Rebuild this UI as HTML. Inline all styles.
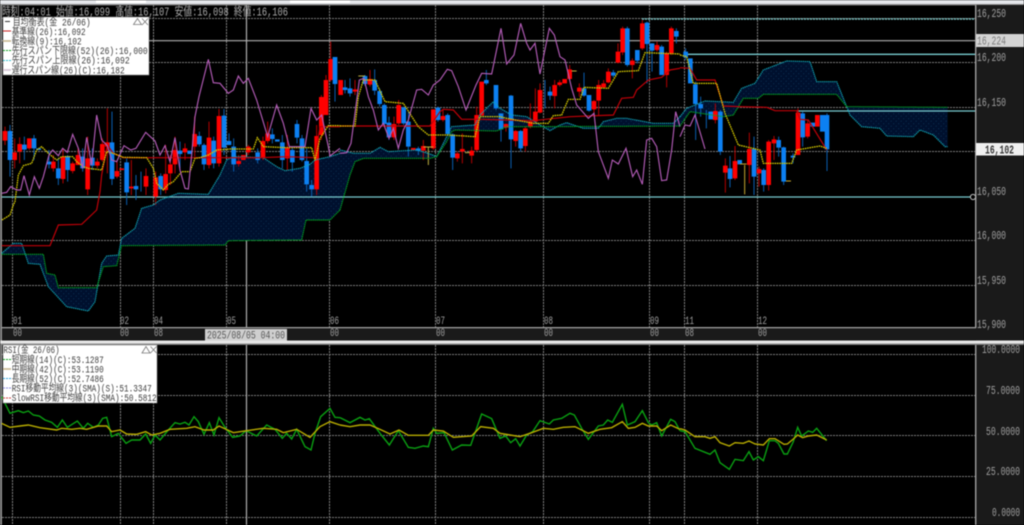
<!DOCTYPE html>
<html lang="ja"><head><meta charset="utf-8"><title>Chart</title>
<style>
html,body{margin:0;padding:0;background:#000;width:1024px;height:525px;overflow:hidden}
svg{display:block;filter:blur(.4px)}
text{font-family:"Liberation Mono","Noto Sans CJK JP",monospace}
.ax{font-size:12px;fill:#a0a0a0}
.t{font-size:11px;fill:#a0a0a0}
.lg{font-size:10px;fill:#404040}
.hl{stroke:#7c7c7c;stroke-width:1;stroke-dasharray:2 1;fill:none}
.vl{stroke:#888;stroke-width:1;stroke-dasharray:2 1;fill:none}
.rb{fill:#ff0000}.bb{fill:#0c80f2}
.rw{stroke:#c00000;stroke-width:2.8;fill:none}
.bw{stroke:#0a64bc;stroke-width:2.8;fill:none}
.p{stroke:#b45cb8;stroke-width:3.4;fill:none}
.y{stroke:#d4c800;stroke-width:3.8;fill:none;stroke-dasharray:5 2}
.k{stroke:#c00008;stroke-width:3.6;fill:none}
.a{stroke:#10a8b8;stroke-width:3.4;fill:none;stroke-dasharray:4 2}
.g{stroke:#00a824;stroke-width:3.4;fill:none;stroke-dasharray:4 2}
.c{fill:url(#d)}
.gr{stroke:#0aa012;stroke-width:4.2;fill:none}
.ol{stroke:#b8ac00;stroke-width:4.2;fill:none}
</style></head><body>
<svg width="1024" height="525" viewBox="0 0 1024 525" xmlns="http://www.w3.org/2000/svg">
<defs>
<pattern id="d" width="15" height="15" patternUnits="userSpaceOnUse">
<rect width="15" height="15" fill="#00102e"/>
<circle cx="3.5" cy="3.5" r="1" fill="#1a7aa0"/><circle cx="11" cy="11" r="1" fill="#1a7aa0"/>
</pattern>
</defs>
<rect width="1024" height="525" fill="#000"/>
<!-- top strip -->
<rect width="1024" height="4" fill="#e4e6ea"/>
<rect y="4" width="1024" height="1.4" fill="#8a8a8a"/>
<rect x="96" y="0" width="50" height="3" fill="#fff"/>
<rect x="290" y="0" width="60" height="3" fill="#fff"/>
<!-- frame -->
<rect x="0" y="5" width="2" height="520" fill="#8e8e8e"/>
<rect x="976" y="5" width="48" height="336" fill="#1a1a1a"/>
<rect x="976" y="345" width="48" height="180" fill="#1a1a1a"/>
<rect x="975" y="5" width="1.4" height="323" fill="#a0a0a0"/>
<rect x="975" y="345" width="1.4" height="180" fill="#a0a0a0"/>
<rect x="2" y="328.2" width="974" height="12" fill="#1a1a1a"/>
<rect x="2" y="327" width="974" height="1.3" fill="#a0a0a0"/>
<rect x="0" y="340.5" width="1024" height="3" fill="#e6e6e6"/>
<rect x="0" y="343.5" width="1024" height="1.4" fill="#8a8a8a"/>
<!-- main grid -->
<path class="hl" d="M2 18.5H975M2 62.5H975M2 107.5H975M2 151.5H975M2 240.5H975M2 285.5H975"/>
<path class="vl" d="M12.5 5V327M120.5 5V327M153.5 5V327M226.5 5V327M329.5 5V327M435.5 5V327M543.5 5V327M649.5 5V327M684.5 5V327M757.5 5V327"/>
<path stroke="#b0b0b0" stroke-width="1.2" fill="none" d="M246.5 5V327M2 40.7H975"/>
<!-- clouds -->
<g transform="translate(0,105) scale(.33333)">
<polygon class="c" points="5,445 40,415 65,415 85,475 120,478 145,545 200,605 265,618 285,590 305,475 320,453 355,450 365,400 405,370 425,310 460,300 480,285 535,265 625,268 660,210 680,165 700,155 790,158 830,185 855,197 900,190 930,178 945,165 990,155 1020,145 1020,315 990,345 918,345 905,405 685,407 675,420 365,422 350,482 310,485 290,548 175,548 165,510 140,505 130,448 5,448"/>
</g>
<g transform="translate(340,0) scale(.33333)">
<polygon class="c" points="0,450 40,460 90,460 120,442 145,455 230,450 270,462 290,470 310,430 335,380 405,375 420,345 460,305 480,325 515,345 560,350 600,375 630,392 660,375 680,368 730,385 775,385 790,365 830,355 860,355 940,370 1000,370 1020,350 1020,378 600,380 500,380 470,393 345,390 335,395 320,425 290,470 270,475 70,475 45,485 30,525 0,630"/>
</g>
<g transform="translate(680,0) scale(.33333)">
<polygon class="c" points="0,350 20,325 75,303 160,307 185,265 225,250 250,210 320,183 390,185 410,245 470,245 500,320 510,345 545,380 600,385 620,408 700,410 720,390 760,405 795,440 803,440 803,322 500,320 470,283 250,283 235,295 190,295 160,345 130,350 30,335 0,378"/>
</g>
<!-- teal price lines -->
<path stroke="#78c4c4" stroke-width="1.4" fill="none" d="M642 19H975" stroke-dasharray="2 1"/>
<path stroke="#78ccd0" stroke-width="1.3" fill="none" d="M686 54.3H975M797 111H975M2 197H970"/>
<circle cx="973" cy="197" r="2.6" fill="#000" stroke="#c0c0c0" stroke-width="1"/>
<!-- candles left -->
<g transform="translate(0,105) scale(.33333)">
<path class="rw" d="M15 65V120M44 100V190M59 97V175M88 100V135M160 150V200M189 130V235M218 170V205M234 130V180M263 95V270M292 160V190M307 100V170M322 10V205M351 170V220M394 165V270M438 190V270M467 200V300M497 120V265M511 150V240M525 95V205M555 115V165M584 35V155M627 50V190M657 12V185M716 150V185M745 120V150M789 95V165M803 50V115M862 90V195M950 60V270M964 -30V105M978 -90V30M992 -190V-70"/>
<path class="bw" d="M30 60V215M73 95V165M102 90V165M147 135V190M175 160V240M203 150V230M248 130V200M277 130V195M336 20V240M380 160V300M408 210V285M423 200V260M482 205V270M540 110V190M598 80V125M612 115V195M641 95V190M672 12V150M687 85V120M701 100V200M773 130V175M817 70V115M847 90V190M877 125V200M891 45V115M906 90V170M920 130V260M935 225V275M1005 -144V-10"/>
<path class="rb" d="M8 78h14V107h-14zM37 142h14V165h-14zM52 117h14V140h-14zM81 100h14V130h-14zM153 170h14V190h-14zM182 155h14V222h-14zM211 175h14V198h-14zM227 150h14V180h-14zM256 160h14V253h-14zM285 170h14V182h-14zM300 117h14V165h-14zM315 112h14V125h-14zM344 198h14V215h-14zM358 190h14V195h-14zM387 245h14V250h-14zM431 213h14V245h-14zM460 217h14V275h-14zM490 207h14V255h-14zM504 178h14V205h-14zM518 135h14V178h-14zM548 130h14V142h-14zM577 87h14V125h-14zM620 98h14V180h-14zM650 33h14V175h-14zM709 168h14V177h-14zM723 150h14V165h-14zM738 125h14V142h-14zM782 108h14V157h-14zM796 85h14V108h-14zM855 128h14V160h-14zM943 93h14V253h-14zM957 -24h14V90h-14zM971 -75h14V30h-14zM985 -138h14V-75h-14z"/>
<path class="bb" d="M23 78h14V165h-14zM66 119h14V134h-14zM95 100h14V130h-14zM109 130h14V135h-14zM140 170h14V178h-14zM168 190h14V220h-14zM196 153h14V195h-14zM241 155h14V190h-14zM270 158h14V182h-14zM329 112h14V222h-14zM373 172h14V262h-14zM401 243h14V253h-14zM475 213h14V253h-14zM533 137h14V147h-14zM562 137h14V147h-14zM591 93h14V118h-14zM605 120h14V178h-14zM634 107h14V175h-14zM665 32h14V128h-14zM680 108h14V120h-14zM694 125h14V178h-14zM766 142h14V165h-14zM810 88h14V102h-14zM825 103h14V110h-14zM840 112h14V165h-14zM870 135h14V172h-14zM884 57h14V98h-14zM899 100h14V165h-14zM913 168h14V238h-14zM928 240h14V253h-14zM998 -144h14V-63h-14z"/>
<polyline class="a" points="5,445 40,415 65,415 85,475 120,478 145,545 200,605 265,618 285,590 305,475 320,453 355,450 365,400 405,370 425,310 460,300 480,285 535,265 625,268 660,210 680,165 700,155 790,158 830,185 855,197 900,190 930,178 945,165 990,155 1020,145"/>
<polyline class="g" points="5,448 130,448 140,505 165,510 175,548 290,548 310,485 350,482 365,422 675,420 685,407 905,405 918,345 990,345 1020,315"/>
<polyline class="k" points="5,422 150,422 175,360 245,358 290,315 300,260 305,210 322,120 340,145 370,158 525,158 780,158 860,155 945,158 960,65 1020,65"/>
<polyline class="y" points="6,345 30,330 40,300 45,290 55,210 70,182 95,175 110,135 125,125 145,145 170,165 185,155 218,155 230,170 250,185 265,190 305,195 320,140 340,145 370,157 440,158 460,190 470,235 490,255 505,238 520,230 545,200 570,200 585,160 600,158 625,150 650,135 690,132 760,132 772,98 790,125 860,128 935,128 945,165 960,100 985,62 1020,62"/>
<polyline class="p" points="5,265 20,262 32,245 50,255 62,255 72,212 88,270 103,215 118,250 130,215 147,150 158,135 175,152 188,130 202,142 218,88 235,130 248,190 260,97 275,180 290,30 305,105 322,122 335,165 350,170 372,122 392,135 408,130 437,82 465,108 480,150 495,122 510,170 525,98 540,195 555,250 565,252 575,150 585,35 597,-25 625,-137 640,-67 660,-65 685,-35 700,-45 715,-87 730,-65 745,-80 770,-15 785,35 803,95 830,0 850,55 868,125 915,125 933,10 950,45 965,30 985,125 990,153 1020,130"/>
</g>
<!-- candles middle -->
<g transform="translate(340,0) scale(.33333)">
<path class="rw" d="M45 240V285M90 210V260M162 350V420M176 300V375M250 420V480M280 328V450M309 330V365M352 455V485M367 400V490M395 440V490M410 320V455M498 370V395M527 390V440M556 380V455M571 310V385M586 265V370M600 250V340M644 240V325M659 240V260M689 195V240M718 250V290M762 300V345M776 240V345M791 240V265M805 205V250M834 130V190M848 80V165M877 175V235M907 60V150M951 125V155M980 155V262M994 80V165"/>
<path class="bw" d="M15 240V280M30 235V290M75 225V258M104 208V285M119 265V320M133 310V380M147 350V420M191 320V375M205 335V470M235 440V465M294 320V365M323 340V405M338 400V510M439 210V255M468 255V330M483 340V425M513 285V505M542 390V455M630 260V300M615 240V325M732 218V290M747 285V335M820 210V232M862 80V200M892 150V190M921 65V250M936 130V215M965 135V225M1009 85V130"/>
<path class="rb" d="M-5 240h14V285h-14zM38 268h14V275h-14zM83 237h14V254h-14zM155 372h14V412h-14zM169 315h14V370h-14zM213 444h14V450h-14zM243 438h14V452h-14zM273 328h14V445h-14zM302 348h14V360h-14zM345 460h14V475h-14zM360 447h14V455h-14zM388 452h14V467h-14zM403 345h14V450h-14zM418 245h14V347h-14zM491 372h14V383h-14zM520 393h14V423h-14zM549 385h14V438h-14zM564 365h14V380h-14zM579 335h14V365h-14zM593 270h14V338h-14zM637 255h14V288h-14zM652 247h14V255h-14zM667 237h14V250h-14zM682 208h14V237h-14zM711 263h14V275h-14zM755 303h14V328h-14zM769 255h14V302h-14zM784 250h14V262h-14zM798 215h14V247h-14zM827 155h14V188h-14zM841 85h14V157h-14zM870 182h14V195h-14zM900 70h14V145h-14zM944 135h14V150h-14zM973 160h14V225h-14zM987 85h14V160h-14z"/>
<path class="bb" d="M8 262h14V270h-14zM23 265h14V280h-14zM68 228h14V252h-14zM97 240h14V272h-14zM112 273h14V312h-14zM126 315h14V372h-14zM140 368h14V412h-14zM184 322h14V370h-14zM198 365h14V440h-14zM228 445h14V452h-14zM287 323h14V360h-14zM316 345h14V402h-14zM331 403h14V473h-14zM432 240h14V250h-14zM461 255h14V325h-14zM476 340h14V388h-14zM506 287h14V418h-14zM535 393h14V445h-14zM623 275h14V287h-14zM725 265h14V287h-14zM740 285h14V332h-14zM813 217h14V227h-14zM855 85h14V195h-14zM885 150h14V182h-14zM914 68h14V132h-14zM929 130h14V152h-14zM958 140h14V225h-14zM1002 93h14V110h-14z"/>
<path stroke="#c0b040" stroke-width="3" fill="none" d="M55 228H75M265 440V495M250 441H280M375 458H390M695 213H710"/>
<polyline class="a" points="0,450 40,460 90,460 120,442 145,455 230,450 270,462 290,470 310,430 335,380 405,375 420,345 460,305 480,325 515,345 560,350 600,375 630,392 660,375 680,368 730,385 775,385 790,365 830,355 860,355 940,370 1000,370 1020,350"/>
<polyline class="g" points="0,630 30,525 45,485 70,475 270,475 290,470 320,425 335,395 345,390 470,393 500,380 600,380 1020,378"/>
<polyline class="k" points="0,378 270,378 300,335 310,328 340,330 365,358 420,358 580,362 690,350 820,345 845,295 880,292 890,270 925,240 965,232 990,210 1020,205"/>
<polyline class="y" points="0,378 45,378 55,290 70,240 105,240 135,305 190,310 235,380 265,405 325,405 405,410 420,350 480,350 500,355 580,370 625,370 640,347 665,345 685,298 720,298 732,262 805,265 835,215 895,212 915,158 1020,162"/>
<polyline class="p" points="0,460 20,458 33,430 45,340 58,240 72,235 85,290 100,330 115,390 130,370 147,415 160,385 175,445 190,390 205,360 230,270 245,268 265,285 280,255 300,240 322,208 335,212 355,260 378,330 408,255 425,220 455,222 483,85 500,192 522,165 542,70 560,130 570,150 585,130 600,222 628,85 643,105 660,170 675,180 695,265 710,315 745,355 762,340 775,455 805,535 817,480 835,492 858,445 878,530 890,510 907,553 920,420 935,415 950,440 965,542 980,540 995,450 1007,335 1020,380"/>
</g>
<!-- candles right -->
<g transform="translate(680,100) scale(.33333)">
<path class="bw" d="M17 -155V-120M47 -55V120M62 -10V50M79 30V85M121 30V165M150 168V262M222 110V285M251 205V275M296 110V170M311 140V255M368 35V140M441 40V213M339 160V190"/>
<path class="rw" d="M106 10V70M136 175V278M165 138V240M208 98V250M237 200V260M266 120V272M282 108V180M354 25V165M383 60V115"/>
<path class="bb" d="M10 -145h14V-128h-14zM24 -125h14V-50h-14zM39 -47h14V12h-14zM55 12h14V25h-14zM85 35h14V58h-14zM114 35h14V155h-14zM143 205h14V237h-14zM172 180h14V193h-14zM215 147h14V230h-14zM244 210h14V255h-14zM289 120h14V143h-14zM304 142h14V245h-14zM332 167h14V173h-14zM361 40h14V112h-14zM391 68h14V80h-14zM420 45h14V95h-14zM434 45h14V148h-14z"/>
<path class="rb" d="M99 33h14V60h-14zM129 197h14V218h-14zM158 183h14V235h-14zM201 147h14V195h-14zM230 207h14V220h-14zM259 125h14V255h-14zM275 118h14V130h-14zM347 38h14V165h-14zM376 70h14V110h-14zM405 45h14V80h-14z"/>
<path stroke="#c8a830" stroke-width="3" fill="none" d="M194 195V283M180 192H200M318 243H333"/>
</g>
<g transform="translate(680,0) scale(.33333)">
<polyline class="a" points="0,350 20,325 75,303 160,307 185,265 225,250 250,210 320,183 390,185 410,245 470,245 500,320 510,345 545,380 600,385 620,408 700,410 720,390 760,405 795,440 803,440"/>
<polyline class="g" points="0,378 30,335 130,350 160,345 190,295 235,295 250,283 470,283 500,320 803,322"/>
<polyline class="k" points="0,203 30,205 50,240 105,240 130,318 180,320 260,322 285,332 350,332 360,358 385,360 440,450"/>
<polyline class="y" points="0,165 20,170 40,250 110,250 135,340 175,435 240,450 250,490 335,490 350,450 420,438 440,445"/>
<polyline class="p" points="0,410 15,375 30,378 45,345 75,447"/>
</g>
<!-- rsi grid -->
<path class="hl" d="M2 354.5H975M2 395.5H975M2 435.5H975M2 476.5H975M2 517.5H975"/>
<path class="vl" d="M12.5 345V525M120.5 345V525M153.5 345V525M226.5 345V525M329.5 345V525M435.5 345V525M543.5 345V525M649.5 345V525M684.5 345V525M757.5 345V525"/>
<path stroke="#b0b0b0" stroke-width="1.2" fill="none" d="M246.5 345V525"/>
<!-- rsi lines -->
<g transform="translate(0,340) scale(.33333)">
<polyline class="gr" points="5,170 15,190 30,220 55,212 70,218 85,213 100,225 118,228 135,240 155,247 172,262 187,240 202,262 232,243 250,265 263,250 280,262 295,255 308,235 320,232 335,290 355,280 378,310 395,300 420,300 437,282 452,310 465,285 480,300 505,270 525,248 540,252 555,247 567,255 582,230 595,245 612,283 628,248 642,285 657,233 675,262 698,292 720,288 738,272 770,288 800,255 825,268 847,295 860,280 875,297 890,268 915,320 933,330 945,280 962,230 990,205 1005,232 1020,233"/>
<polyline class="ol" points="5,250 30,262 60,258 85,255 120,263 170,270 185,265 215,268 240,265 260,268 295,258 320,258 335,275 360,270 380,282 410,283 437,275 455,285 480,280 510,268 560,265 585,260 612,270 640,270 657,258 700,278 740,272 790,265 830,268 850,278 890,268 930,292 960,260 990,245 1020,255"/>
</g>
<g transform="translate(340,340) scale(.33333)">
<polyline class="gr" points="0,233 30,248 60,232 75,240 88,236 120,280 148,315 175,272 205,322 225,325 250,318 265,320 280,265 290,280 312,278 337,330 365,315 392,316 425,222 455,236 480,295 497,288 512,308 527,296 540,318 560,285 578,275 600,242 628,252 640,240 665,235 690,220 703,225 725,265 745,298 775,258 790,255 803,240 817,247 847,193 862,255 885,245 907,212 925,248 935,255 950,248 965,288 992,238 1005,245 1020,272"/>
<polyline class="ol" points="0,255 30,260 60,255 90,255 120,268 150,282 177,270 205,286 265,286 280,270 310,273 340,292 395,288 422,260 460,265 480,280 510,285 540,290 570,280 610,265 640,268 670,262 705,260 745,280 780,268 815,263 847,245 865,265 885,262 907,250 925,258 950,258 965,272 992,255 1020,268"/>
</g>
<g transform="translate(680,340) scale(.33333)">
<polyline class="gr" points="0,272 15,275 45,325 90,343 105,330 120,368 148,388 165,358 190,362 207,335 220,360 235,350 250,362 268,302 285,302 295,310 312,342 322,342 340,305 353,262 365,288 385,273 398,277 410,265 440,302"/>
<polyline class="ol" points="0,266 15,270 45,290 75,290 90,295 105,290 120,308 148,318 165,308 190,310 207,303 225,312 250,315 268,296 285,296 312,313 322,312 340,297 353,285 368,293 385,288 410,285 440,300"/>
</g>
<!-- axis labels -->
<text class="ax" x="977" y="17" textLength="29" lengthAdjust="spacingAndGlyphs">16,250</text>
<rect x="976" y="34" width="48" height="13" fill="#d4d4d4"/>
<text class="ax" x="977" y="44.5" textLength="29" lengthAdjust="spacingAndGlyphs" style="fill:#7c7c7c">16,224</text>
<text class="ax" x="977" y="61" textLength="29" lengthAdjust="spacingAndGlyphs">16,200</text>
<text class="ax" x="977" y="106" textLength="29" lengthAdjust="spacingAndGlyphs">16,150</text>
<rect x="976" y="143" width="48" height="12.5" fill="#f0f0f0"/>
<text class="ax" x="985" y="153.5" textLength="29" lengthAdjust="spacingAndGlyphs" style="fill:#333;font-weight:bold">16,102</text>
<text class="ax" x="977" y="195" textLength="29" lengthAdjust="spacingAndGlyphs">16,050</text>
<text class="ax" x="977" y="239" textLength="29" lengthAdjust="spacingAndGlyphs">16,000</text>
<text class="ax" x="977" y="284" textLength="29" lengthAdjust="spacingAndGlyphs">15,950</text>
<text class="ax" x="977" y="328" textLength="29" lengthAdjust="spacingAndGlyphs">15,900</text>
<text class="ax" x="982" y="353" textLength="38" lengthAdjust="spacingAndGlyphs">100.0000</text>
<text class="ax" x="986" y="394" textLength="34" lengthAdjust="spacingAndGlyphs">75.0000</text>
<text class="ax" x="986" y="435" textLength="34" lengthAdjust="spacingAndGlyphs">50.0000</text>
<text class="ax" x="986" y="475" textLength="34" lengthAdjust="spacingAndGlyphs">25.0000</text>
<text class="ax" x="992" y="516" textLength="28" lengthAdjust="spacingAndGlyphs">0.0000</text>
<!-- time labels -->
<text class="t" x="13" y="324" textLength="9" lengthAdjust="spacingAndGlyphs">01</text><text class="t" x="120" y="324" textLength="9" lengthAdjust="spacingAndGlyphs">02</text><text class="t" x="154" y="324" textLength="9" lengthAdjust="spacingAndGlyphs">04</text><text class="t" x="227" y="324" textLength="9" lengthAdjust="spacingAndGlyphs">05</text><text class="t" x="330" y="324" textLength="9" lengthAdjust="spacingAndGlyphs">06</text><text class="t" x="436" y="324" textLength="9" lengthAdjust="spacingAndGlyphs">07</text><text class="t" x="544" y="324" textLength="9" lengthAdjust="spacingAndGlyphs">08</text><text class="t" x="650" y="324" textLength="9" lengthAdjust="spacingAndGlyphs">09</text><text class="t" x="685" y="324" textLength="9" lengthAdjust="spacingAndGlyphs">11</text><text class="t" x="758" y="324" textLength="9" lengthAdjust="spacingAndGlyphs">12</text>
<text class="t" x="13" y="336" textLength="9" lengthAdjust="spacingAndGlyphs">00</text><text class="t" x="120" y="336" textLength="9" lengthAdjust="spacingAndGlyphs">00</text><text class="t" x="154" y="336" textLength="9" lengthAdjust="spacingAndGlyphs">08</text><text class="t" x="330" y="336" textLength="9" lengthAdjust="spacingAndGlyphs">00</text><text class="t" x="436" y="336" textLength="9" lengthAdjust="spacingAndGlyphs">00</text><text class="t" x="544" y="336" textLength="9" lengthAdjust="spacingAndGlyphs">00</text><text class="t" x="650" y="336" textLength="9" lengthAdjust="spacingAndGlyphs">00</text><text class="t" x="685" y="336" textLength="9" lengthAdjust="spacingAndGlyphs">08</text><text class="t" x="758" y="336" textLength="9" lengthAdjust="spacingAndGlyphs">00</text>
<rect x="205" y="329" width="82" height="11.5" fill="#cfcfcf"/>
<text x="207" y="338.5" font-size="11" fill="#555" textLength="78" lengthAdjust="spacingAndGlyphs">2025/08/05 04:00</text>
<!-- header info -->
<text x="2" y="15.5" font-size="12" fill="#a8a8a8" textLength="286" lengthAdjust="spacingAndGlyphs">時刻:04:01 始値:16,099 高値:16,107 安値:16,098 終値:16,106</text>
<!-- main legend -->
<rect x="3" y="17" width="146" height="58" fill="#fff"/>
<rect x="3" y="17" width="146" height="58" fill="none" stroke="#888" stroke-width=".6"/>
<path stroke="#333" stroke-width="1" d="M5 21.5H10"/>
<text class="lg" x="12.7" y="25.5" textLength="78" lengthAdjust="spacingAndGlyphs">目均衡表(金 26/06)</text>
<path stroke="#c82020" stroke-width="1" d="M3 31H11"/>
<text class="lg" x="11.7" y="35" textLength="74" lengthAdjust="spacingAndGlyphs">基準線(26):16,092</text>
<path stroke="#c8b890" stroke-width="1.6" d="M3 41H11"/>
<text class="lg" x="11.7" y="44.5" textLength="70" lengthAdjust="spacingAndGlyphs">転換線(9):16,102</text>
<path stroke="#10a020" stroke-width="1" stroke-dasharray="2 1" d="M3 50.5H11"/>
<text class="lg" x="11.7" y="54" textLength="136" lengthAdjust="spacingAndGlyphs">先行スパン下限線(52)(26):16,000</text>
<path stroke="#30c0d0" stroke-width="1" stroke-dasharray="2 1" d="M3 60.5H11"/>
<text class="lg" x="11.7" y="63.5" textLength="118" lengthAdjust="spacingAndGlyphs">先行スパン上限線(26):16,092</text>
<path stroke="#d8c8d8" stroke-width="1.8" d="M3 70H11"/>
<text class="lg" x="11.7" y="73.3" textLength="113" lengthAdjust="spacingAndGlyphs">遅行スパン線(26)(C):16,182</text>
<path stroke="#777" stroke-width=".8" fill="none" d="M133.5 24.5L137.5 18.5L141.5 24.5ZM142 18.5L148 25M148 18.5L142 25"/>
<!-- rsi legend -->
<rect x="3" y="345" width="154" height="58" fill="#fff"/>
<rect x="3" y="345" width="154" height="58" fill="none" stroke="#888" stroke-width=".6"/>
<text class="lg" x="3.5" y="353" textLength="56" lengthAdjust="spacingAndGlyphs">RSI(金 26/06)</text>
<path stroke="#10a020" stroke-width="1" stroke-dasharray="2 1" d="M3 359.5H11"/>
<text class="lg" x="11.7" y="363" textLength="92" lengthAdjust="spacingAndGlyphs">短期線(14)(C):53.1287</text>
<path stroke="#c8b890" stroke-width="1.6" d="M3 369H11"/>
<text class="lg" x="11.7" y="372.5" textLength="92" lengthAdjust="spacingAndGlyphs">中期線(42)(C):53.1190</text>
<path stroke="#30a8e0" stroke-width="1" stroke-dasharray="2 1" d="M3 378.5H11"/>
<text class="lg" x="11.7" y="382" textLength="92" lengthAdjust="spacingAndGlyphs">長期線(52)(C):52.7486</text>
<path stroke="#8888e0" stroke-width="1" stroke-dasharray="2 1" d="M3 388H11"/>
<text class="lg" x="11.7" y="391.5" textLength="140" lengthAdjust="spacingAndGlyphs">RSI移動平均線(3)(SMA)(S):51.3347</text>
<path stroke="#d04040" stroke-width="1" stroke-dasharray="2 1" d="M3 398H11"/>
<text class="lg" x="11.7" y="401" textLength="145" lengthAdjust="spacingAndGlyphs">SlowRSI移動平均線(3)(SMA):50.5812</text>
<path stroke="#777" stroke-width=".8" fill="none" d="M142 353L146 346.5L150 353ZM150.5 346.5L156.5 353M156.5 346.5L150.5 353"/>
</svg>
</body></html>
